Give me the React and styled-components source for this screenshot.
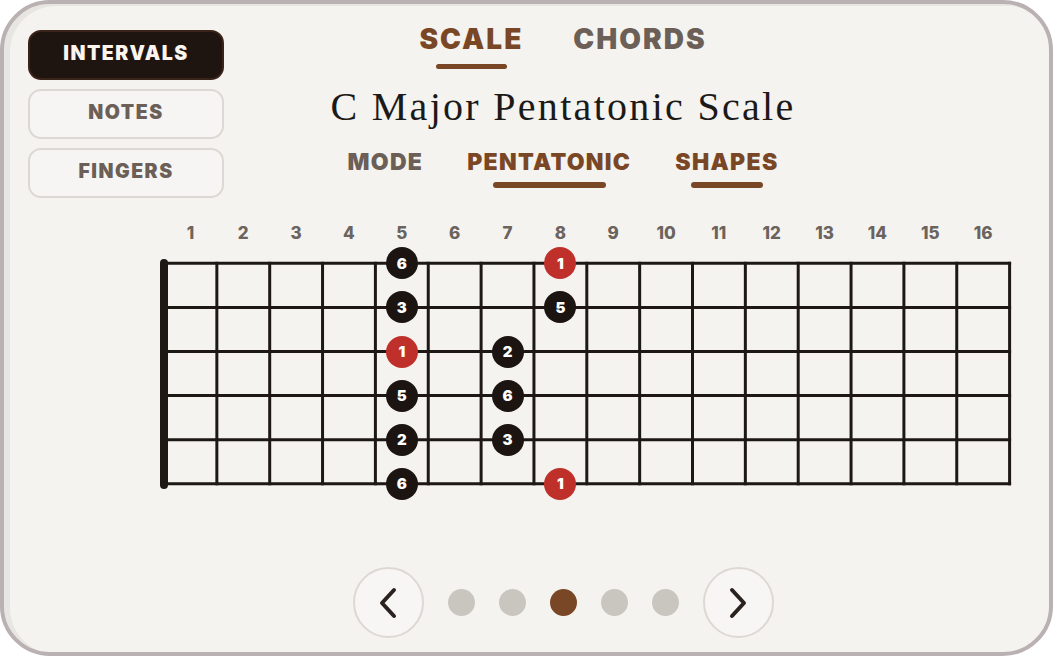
import React from 'react';
import styled, { createGlobalStyle } from 'styled-components';

const Global = createGlobalStyle`
  html, body { margin: 0; padding: 0; background: #ffffff; }
  body { font-family: "Inter", "Noto Sans", sans-serif; }
  * { box-sizing: border-box; }
`;

const BROWN = '#7a4726';
const GREY = '#6b5f57';
const INK = '#1c1410';
const RED = '#c0302a';
const HEAVY = '"Inter", "Noto Sans", sans-serif';

const CELL = 52.85;
const NUT_X = 4;
const STRING_TOP = 16.3;
const STRING_GAP = 44.1;

const Frame = styled.div`
  width: 1053px;
  height: 656px;
  border: 4px solid #b9b1b2;
  border-radius: 50px;
  background: #f4f3f0;
  box-shadow: inset 6px 2px 0 #e7e6e3;
  padding: 18px 0 0 24px;
  overflow: hidden;
`;

const TopRow = styled.div`
  display: flex;
  align-items: flex-start;
`;

const Sidebar = styled.div`
  width: 196px;
  margin-top: 8px;
  display: flex;
  flex-direction: column;
  gap: 9px;
`;

const ModeButton = styled.button`
  width: 196px;
  height: 50px;
  border-radius: 13px;
  border: 2px solid ${(p) => (p.$active ? '#3a2419' : '#dcd8d3')};
  background: ${(p) => (p.$active ? '#1e1511' : '#f6f5f3')};
  color: ${(p) => (p.$active ? '#fbf5ee' : GREY)};
  font: 900 19.5px/1 ${HEAVY};
  letter-spacing: 1.5px;
  padding: 0 0 2px;
  cursor: pointer;
`;

const Header = styled.div`
  width: 678px;
  display: flex;
  flex-direction: column;
  align-items: center;
`;

const TabRow = styled.div`
  display: flex;
  gap: ${(p) => p.$gap}px;
  align-items: flex-start;
  margin-top: ${(p) => p.$top || 0}px;
`;

const Tab = styled.div`
  display: flex;
  flex-direction: column;
  align-items: center;
  font: 900 ${(p) => p.$size}px/${(p) => p.$lh}px ${HEAVY};
  letter-spacing: ${(p) => p.$ls}px;
  color: ${(p) => (p.$active ? BROWN : GREY)};
  &::after {
    content: '';
    display: block;
    width: 69%;
    height: ${(p) => p.$uh}px;
    border-radius: 3px;
    margin-top: ${(p) => p.$ul}px;
    background: ${(p) => (p.$active ? BROWN : 'transparent')};
  }
`;

const Title = styled.h1`
  margin: 14px 0 0;
  font: 400 40px/48px "Liberation Serif", "Times New Roman", serif;
  color: #1c1a18;
  letter-spacing: 2.3px;
`;

const FretArea = styled.div`
  margin: 24px 0 0 132px;
  width: 860px;
`;

const NumberRow = styled.div`
  display: grid;
  grid-template-columns: repeat(16, ${CELL}px);
  padding-left: ${NUT_X}px;
  height: 22px;
`;

const FretNumber = styled.span`
  text-align: center;
  font: 800 17px/22px ${HEAVY};
  color: #6b635d;
`;

const Board = styled.div`
  position: relative;
  margin-top: 3px;
  height: 254px;
`;

const Lines = styled.svg`
  position: absolute;
  left: 0;
  top: 0;
`;

const Dot = styled.div`
  position: absolute;
  width: 32px;
  height: 32px;
  margin: -16px 0 0 -16px;
  border-radius: 50%;
  background: ${(p) => (p.$root ? RED : INK)};
  color: #ffffff;
  display: flex;
  align-items: center;
  justify-content: center;
  font: 900 15px/1 ${HEAVY};
`;

const Pager = styled.div`
  margin: 66px 0 0 196px;
  width: 678px;
  display: flex;
  align-items: center;
  justify-content: center;
  gap: 24px;
`;

const ArrowButton = styled.button`
  width: 71px;
  height: 71px;
  border-radius: 50%;
  border: 2px solid #ddd8d3;
  background: #f7f6f4;
  display: flex;
  align-items: center;
  justify-content: center;
  padding: 0;
  cursor: pointer;
`;

const PageDot = styled.span`
  width: 27px;
  height: 27px;
  border-radius: 50%;
  background: ${(p) => (p.$active ? BROWN : '#c9c6bf')};
`;

const notes = [
  { s: 0, f: 5, t: '6' },
  { s: 0, f: 8, t: '1', r: true },
  { s: 1, f: 5, t: '3' },
  { s: 1, f: 8, t: '5' },
  { s: 2, f: 5, t: '1', r: true },
  { s: 2, f: 7, t: '2' },
  { s: 3, f: 5, t: '5' },
  { s: 3, f: 7, t: '6' },
  { s: 4, f: 5, t: '2' },
  { s: 4, f: 7, t: '3' },
  { s: 5, f: 5, t: '6' },
  { s: 5, f: 8, t: '1', r: true },
];

const Chevron = ({ dir }) => (
  <svg width="20" height="32" viewBox="0 0 20 32">
    <polyline
      points={dir === 'left' ? '16,3 4,16 16,29' : '4,3 16,16 4,29'}
      fill="none"
      stroke="#2a221e"
      strokeWidth="4"
      strokeLinecap="round"
      strokeLinejoin="round"
    />
  </svg>
);

function Fretboard() {
  const width = NUT_X + CELL * 16 + 2;
  const bottom = STRING_TOP + STRING_GAP * 5;
  return (
    <FretArea>
      <NumberRow>
        {Array.from({ length: 16 }, (_, i) => (
          <FretNumber key={i}>{i + 1}</FretNumber>
        ))}
      </NumberRow>
      <Board>
        <Lines width={width} height={254}>
          {Array.from({ length: 6 }, (_, i) => (
            <line
              key={'s' + i}
              x1={NUT_X}
              x2={NUT_X + CELL * 16 + 1.5}
              y1={STRING_TOP + STRING_GAP * i}
              y2={STRING_TOP + STRING_GAP * i}
              stroke="#1e1814"
              strokeWidth="3"
            />
          ))}
          {Array.from({ length: 16 }, (_, i) => (
            <line
              key={'f' + i}
              x1={NUT_X + CELL * (i + 1)}
              x2={NUT_X + CELL * (i + 1)}
              y1={STRING_TOP - 1.5}
              y2={bottom + 1.5}
              stroke="#1e1814"
              strokeWidth="3"
            />
          ))}
          <rect x="0" y="12" width="8" height="230" rx="4" fill="#1e1814" />
        </Lines>
        {notes.map((n, i) => (
          <Dot
            key={i}
            $root={n.r}
            style={{ left: NUT_X + CELL * (n.f - 0.5), top: STRING_TOP + STRING_GAP * n.s }}
          >
            {n.t}
          </Dot>
        ))}
      </Board>
    </FretArea>
  );
}

export default function App() {
  return (
    <>
      <Global />
      <Frame>
        <TopRow>
          <Sidebar>
            <ModeButton $active>INTERVALS</ModeButton>
            <ModeButton>NOTES</ModeButton>
            <ModeButton>FINGERS</ModeButton>
          </Sidebar>
          <Header>
            <TabRow $gap={50}>
              <Tab $active $size={28} $lh={34} $ls={2} $ul={8} $uh={5}>SCALE</Tab>
              <Tab $size={28} $lh={34} $ls={2} $ul={8} $uh={5}>CHORDS</Tab>
            </TabRow>
            <Title>C Major Pentatonic Scale</Title>
            <TabRow $gap={44} $top={17}>
              <Tab $size={23} $lh={28} $ls={1.3} $ul={6} $uh={6}>MODE</Tab>
              <Tab $active $size={23} $lh={28} $ls={1.3} $ul={6} $uh={6}>PENTATONIC</Tab>
              <Tab $active $size={23} $lh={28} $ls={1.3} $ul={6} $uh={6}>SHAPES</Tab>
            </TabRow>
          </Header>
        </TopRow>
        <Fretboard />
        <Pager>
          <ArrowButton aria-label="Previous">
            <Chevron dir="left" />
          </ArrowButton>
          {[0, 1, 2, 3, 4].map((i) => (
            <PageDot key={i} $active={i === 2} />
          ))}
          <ArrowButton aria-label="Next">
            <Chevron dir="right" />
          </ArrowButton>
        </Pager>
      </Frame>
    </>
  );
}
